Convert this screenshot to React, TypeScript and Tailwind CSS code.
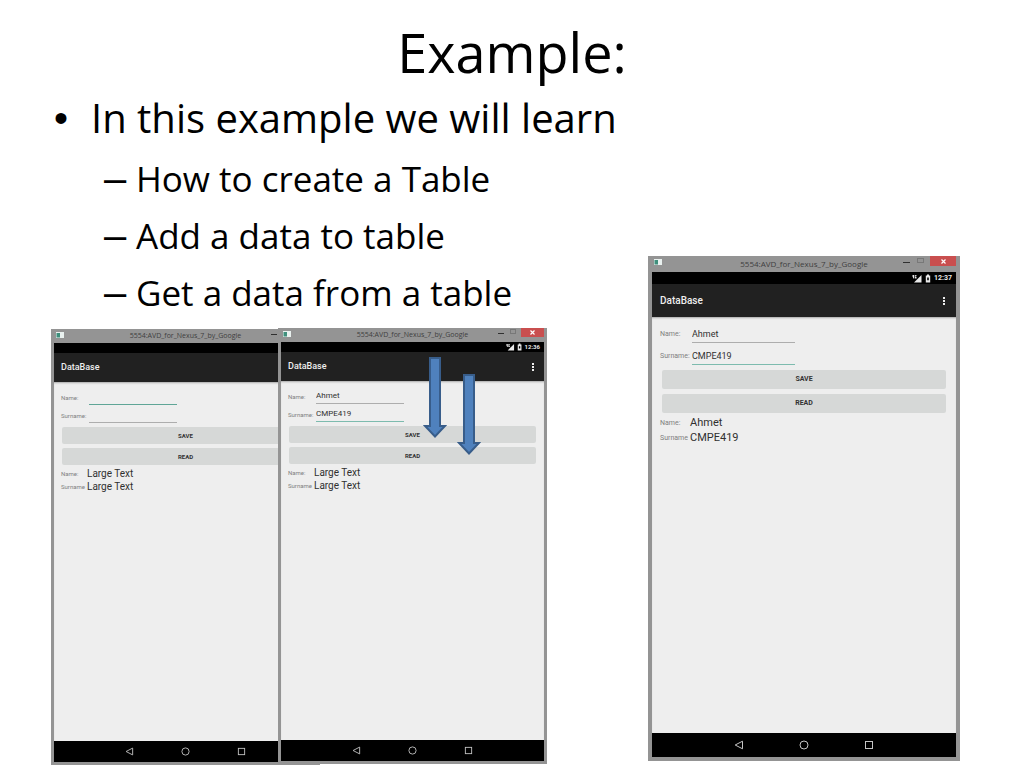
import { useId } from 'react';
import clsx from 'clsx';

type EmulatorProps = {
  large?: boolean;
  time?: string;
  name?: string;
  surname?: string;
  focused: 'name' | 'surname';
  results: [string, string];
  className?: string;
};

const topics = ['How to create a Table', 'Add a data to table', 'Get a data from a table'];

function WindowIcon() {
  return (
    <svg viewBox="0 0 8 6" className="w-2 h-1.5" aria-hidden="true">
      <rect width="8" height="6" fill="#e9f1ef" />
      <rect x="0.5" y="1" width="3.5" height="4.5" fill="#3f8f7c" />
    </svg>
  );
}

function StatusIcons({ large }: { large?: boolean }) {
  return (
    <svg viewBox="0 0 20 9" className={large ? 'w-5 h-[9px]' : 'w-[17px] h-2'} fill="#e8e8e8" aria-hidden="true">
      <path d="M0.5 1h1.6v3.4H1.4L0.5 2.6zM2.8 1h1.8v0.8H3.5v1h1v1.6H2.8z" />
      <path d="M9.5 1v7.5H2z" />
      <path d="M15 0.5h2v1h1.2v7h-4.4v-7H15zM15.2 3.6v2.6h1.6V3.6z" fillRule="evenodd" />
    </svg>
  );
}

function Emulator({ large, time, name = '', surname = '', focused, results, className }: EmulatorProps) {
  const id = useId();

  const row = clsx('flex items-center', large ? 'h-[18px]' : 'h-4');
  const label = clsx('shrink-0 text-[#808080] whitespace-nowrap', large ? 'w-8 text-[7px]' : 'w-7 text-[6px]');
  const resultLabel = clsx(
    'shrink-0 text-[#808080] whitespace-nowrap',
    large ? 'w-[30px] text-[7px]' : 'w-[26px] text-[6px]',
  );
  const input = clsx(
    'h-full min-w-0 border-b bg-transparent p-0 text-[#303030] outline-none',
    large ? 'w-[103px] text-[9px]' : 'w-[88px] text-[8px]',
  );
  const button = clsx(
    'block w-full rounded-[2px] bg-[#d6d8d7] font-bold text-[#333333] text-center',
    large ? 'h-[19px] text-[7px] leading-[19px]' : 'h-[17px] text-[6px] leading-[17px]',
  );
  const result = clsx('flex items-center', large ? 'h-[15px]' : 'h-[13px]');
  const value = clsx('whitespace-nowrap text-[#303030]', large ? 'text-[11px]' : 'text-[10px]');
  const navIcon = clsx('fill-none stroke-[#c4c4c4]', large ? 'size-[10px]' : 'size-[9px]');

  return (
    <section
      className={clsx(
        'w-full shrink-0 bg-[#949494] font-[Roboto,sans-serif]',
        large ? 'max-w-[312px] px-1 pb-1' : 'max-w-[269px] px-[3px] pb-[3px]',
        className,
      )}
    >
      {/* title bar */}
      <header className={clsx('relative flex justify-center', large ? 'h-4' : 'h-[14px]')}>
        <span className="absolute left-0.5 top-[3px] flex">
          <WindowIcon />
        </span>
        <h2
          className={clsx(
            'font-["Open_Sans",sans-serif] text-[#404040] whitespace-nowrap',
            large ? 'text-[8px] leading-[15px]' : 'text-[7px] leading-[14px]',
          )}
        >
          5554:AVD_for_Nexus_7_by_Google
        </h2>
        <div className="absolute right-0 top-0 flex items-start">
          <button aria-label="Minimize" className={clsx('flex justify-center', large ? 'w-4 pt-1.5' : 'w-[13px] pt-[5px]')}>
            <span className={clsx('h-px bg-[#303030]', large ? 'w-[7px]' : 'w-1.5')} />
          </button>
          <button aria-label="Maximize" className={clsx('flex justify-center', large ? 'w-3 pt-0.5' : 'w-[11px] pt-px')}>
            <span className={clsx('border border-[#787878]', large ? 'w-[7px] h-[5px]' : 'w-1.5 h-[5px]')} />
          </button>
          <button
            aria-label="Close"
            className={clsx(
              'flex items-center justify-center bg-[#c94f4f]',
              large ? 'ml-1 h-[10px] w-[26px]' : 'ml-[3px] h-[9px] w-[23px]',
            )}
          >
            <svg viewBox="0 0 5 5" className="size-[5px] stroke-white" strokeWidth="1.2" aria-hidden="true">
              <path d="M0.5 0.5l4 4M4.5 0.5l-4 4" />
            </svg>
          </button>
        </div>
      </header>

      {/* android status bar */}
      <div
        className={clsx(
          'flex items-center justify-end gap-0.5 bg-black pr-1 font-bold text-[#e8e8e8]',
          large ? 'h-3 text-[7px] leading-3' : 'h-[10px] text-[6px] leading-[10px]',
        )}
      >
        {time && (
          <>
            <StatusIcons large={large} />
            <span>{time}</span>
          </>
        )}
      </div>

      {/* action bar */}
      <div
        className={clsx(
          'flex items-center justify-between bg-[#212121]',
          large ? 'h-[33px] px-2' : 'h-[29px] px-[7px]',
        )}
      >
        <h3 className={clsx('font-medium text-[#eeeeee]', large ? 'text-[10px]' : 'text-[9px]')}>DataBase</h3>
        <button aria-label="More options" className="w-2 flex justify-center">
          <svg viewBox="0 0 2 8" className="w-0.5 h-2 fill-[#eeeeee]" aria-hidden="true">
            <rect width="2" height="2" />
            <rect y="3" width="2" height="2" />
            <rect y="6" width="2" height="2" />
          </svg>
        </button>
      </div>

      <div
        className={clsx(
          'bg-[#eeeeee] shadow-[inset_0_2px_2px_-1px_#a8a8a8]',
          large ? 'min-h-[416px] pt-2' : 'min-h-[359px] pt-[7px]',
        )}
      >
        <div className={clsx('flex flex-col', large ? 'gap-1 pl-2' : 'gap-0.5 pl-[7px]')}>
          <div className={row}>
            <label htmlFor={`${id}-name`} className={label}>
              Name:
            </label>
            <input
              id={`${id}-name`}
              defaultValue={name}
              className={clsx(input, focused === 'name' ? 'border-[#5fa596]' : 'border-[#adadad]')}
            />
          </div>
          <div className={row}>
            <label htmlFor={`${id}-surname`} className={label}>
              Surname:
            </label>
            <input
              id={`${id}-surname`}
              defaultValue={surname}
              className={clsx(input, focused === 'surname' ? 'border-[#7dbbae]' : 'border-[#adadad]')}
            />
          </div>
        </div>

        <div className={clsx('flex flex-col', large ? 'mt-[5px] gap-[5px] px-[10px]' : 'mt-1 gap-1 px-2')}>
          <button className={button}>SAVE</button>
          <button className={button}>READ</button>
        </div>

        <dl className={large ? 'mt-[3px] pl-2' : 'mt-0.5 pl-[7px]'}>
          <div className={result}>
            <dt className={resultLabel}>Name:</dt>
            <dd className={value}>{results[0]}</dd>
          </div>
          <div className={result}>
            <dt className={resultLabel}>Surname</dt>
            <dd className={value}>{results[1]}</dd>
          </div>
        </dl>
      </div>

      {/* navigation bar */}
      <nav
        className={clsx(
          'flex items-center justify-center bg-black',
          large ? 'h-6 gap-[55px]' : 'h-[21px] gap-[47px]',
        )}
      >
        <button aria-label="Back">
          <svg viewBox="0 0 10 10" className={navIcon}>
            <path d="M8.5 1.2v7.6L1.2 5z" />
          </svg>
        </button>
        <button aria-label="Home">
          <svg viewBox="0 0 10 10" className={navIcon}>
            <circle cx="5" cy="5" r="4" />
          </svg>
        </button>
        <button aria-label="Recent apps">
          <svg viewBox="0 0 10 10" className={navIcon}>
            <rect x="1.5" y="1.5" width="7" height="7" />
          </svg>
        </button>
      </nav>
    </section>
  );
}

function Arrow({ className }: { className: string }) {
  return (
    <svg viewBox="0 0 24 81" className={clsx('absolute w-6 h-[81px]', className)} aria-hidden="true">
      <path d="M7 1h10v68h5L12 79.5 2 69h5z" fill="#4f81bd" stroke="#385d8a" strokeWidth="2" />
    </svg>
  );
}

function App() {
  return (
    <div className="min-h-screen bg-white font-['Open_Sans',sans-serif] text-black">
      <h1 className="pt-1.5 text-center text-[54px] leading-[92px]">Example:</h1>

      <main className="flex items-start justify-between pl-[51px] pr-16">
        <div className="min-w-0">
          <ul>
            <li className="flex text-[40px] leading-10 whitespace-nowrap">
              <span className="w-10 pl-[3px] font-['Liberation_Sans',sans-serif]">•</span>
              In this example we will learn
            </li>
            <li className="pt-3">
              <ul className="pl-[53px] text-[35px] leading-[57px] whitespace-nowrap">
                {topics.map((topic) => (
                  <li key={topic} className="flex">
                    <span className="w-8 text-[40px] leading-[57px] font-['Liberation_Sans',sans-serif]">–</span>
                    {topic}
                  </li>
                ))}
              </ul>
            </li>
          </ul>

          <div className="flex items-start pt-[7px]">
            <Emulator focused="name" results={['Large Text', 'Large Text']} className="mt-px" />
            <div className="relative -ml-[42px] w-[269px] shrink-0">
              <Emulator
                time="12:36"
                name="Ahmet"
                surname="CMPE419"
                focused="surname"
                results={['Large Text', 'Large Text']}
              />
              <Arrow className="left-[145px] top-[29px]" />
              <Arrow className="left-[179px] top-[46px]" />
            </div>
          </div>
        </div>

        <div className="w-[312px] shrink-0 pt-[158px]">
          <Emulator
            large
            time="12:37"
            name="Ahmet"
            surname="CMPE419"
            focused="surname"
            results={['Ahmet', 'CMPE419']}
          />
        </div>
      </main>
    </div>
  );
}

export default App;
